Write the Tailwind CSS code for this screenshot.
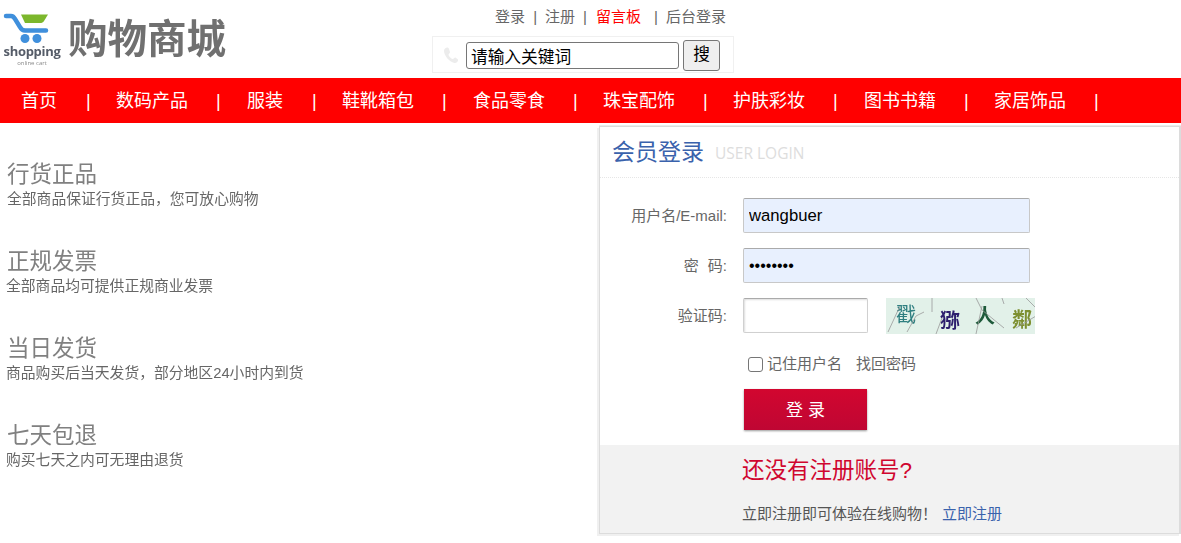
<!DOCTYPE html>
<html lang="zh-CN">
<head>
    <meta charset="UTF-8">
    <meta name="viewport" content="width=device-width, initial-scale=1.0">
    <title>购物商城</title>
    <script src="https://cdn.jsdelivr.net/npm/@tailwindcss/browser@4"></script>
</head>
<body class="bg-white h-[543px] overflow-hidden font-['Liberation_Sans','Noto_Sans_CJK_SC',sans-serif]">
    <!-- header -->
    <header class="relative flex h-[78px]">
        <div class="w-[432px] pl-[3px] pt-[13px] flex items-start">
            <div class="w-[58px] flex flex-col items-center">
                <svg width="58" height="31" viewBox="0 0 58 31" class="blur-[0.4px]">
                    <path d="M3 3H8C10 3 11 4 12 6L17 14C18 16 19 17.500 22 17.500H43" fill="none" stroke="#3f8fdc" stroke-width="4.500" stroke-linecap="round"/>
                    <path d="M18 1.500H45L41 8C40 9.500 39 10 37 10H22Z" fill="#7cb72c"/>
                    <circle cx="22" cy="25.500" r="4.500" fill="#3f8fdc"/>
                    <circle cx="34" cy="25.500" r="4.500" fill="#3f8fdc"/>
                </svg>
                <span class="text-[13px] leading-[14px] font-bold tracking-[-0.3px] text-[#555c68] font-['Open_Sans',sans-serif] blur-[0.3px]">shopping</span>
                <span class="mt-[2px] text-[6px] leading-[6px] text-[#8a8a8a] font-['Open_Sans',sans-serif] blur-[0.3px]">online cart</span>
            </div>
            <span class="ml-[7px] mt-[2px] text-[39.500px] leading-[48px] font-bold text-[#707070] blur-[0.5px]">购物商城</span>
        </div>
        <div class="w-[302px] flex flex-col items-center">
            <div class="mt-[8px] h-[18px] ml-[55px] flex items-center text-[15px] leading-[18px] text-[#666] whitespace-pre">
                <span>登录</span><span class="mx-[8px]">|</span><span>注册</span><span class="ml-[8px] mr-[9px]">|</span><span class="text-[#f00]">留言板</span><span class="ml-[13px] mr-[8px]">|</span><span>后台登录</span>
            </div>
            <div class="mt-[10px] w-[302px] h-[37px] border border-[#f0f0f0] flex items-center pl-[10px]">
                <svg width="16" height="18" viewBox="0 0 16 18" class="shrink-0">
                    <path d="M2 2.500C4 1 5.500 1.500 6 3L7 6C7 7.500 5.500 7.500 5.500 9C6.500 11 8 12.500 9.500 13C11 13 11 11.500 12.500 11.500L15 13.500C15.500 15 14 17 11.500 17C6 16 1 9 1 5C1 4 1.500 3 2 2.500Z" fill="#ececec"/>
                </svg>
                <input type="text" value="请输入关键词" class="ml-[7px] mt-[2px] w-[213px] h-[27px] border border-[#767676] rounded-[3px] px-[4px] text-[16.7px] text-black outline-none">
                <button class="ml-[4px] mt-[1px] w-[37px] h-[31px] bg-[#efefef] border border-[#767676] rounded-[3px] text-[16.7px] text-black">搜</button>
            </div>
        </div>
    </header>

    <!-- nav -->
    <nav class="h-[45px] bg-[#f00] flex items-center pl-[21px] pt-[2px] text-white text-[18px] leading-[43px] whitespace-nowrap">
        <a class="w-[36px]">首页</a><span class="ml-[29px] mr-[27px] w-[3px]">|</span>
        <a class="w-[72px]">数码产品</a><span class="ml-[28px] mr-[28px] w-[3px]">|</span>
        <a class="w-[36px]">服装</a><span class="ml-[29px] mr-[27px] w-[3px]">|</span>
        <a class="w-[72px]">鞋靴箱包</a><span class="ml-[28px] mr-[28px] w-[3px]">|</span>
        <a class="w-[72px]">食品零食</a><span class="ml-[28px] mr-[27px] w-[3px]">|</span>
        <a class="w-[72px]">珠宝配饰</a><span class="ml-[28px] mr-[27px] w-[3px]">|</span>
        <a class="w-[72px]">护肤彩妆</a><span class="ml-[28px] mr-[28px] w-[3px]">|</span>
        <a class="w-[72px]">图书书籍</a><span class="ml-[28px] mr-[27px] w-[3px]">|</span>
        <a class="w-[72px]">家居饰品</a><span class="ml-[28px] w-[3px]">|</span>
    </nav>

    <main class="flex">
        <!-- left promo -->
        <section class="w-[599px] pt-[37px] pl-[7px] flex flex-col gap-[38px] text-[#808080] blur-[0.6px]">
            <div>
                <h3 class="text-[22.500px] leading-[29px]">行货正品</h3>
                <p class="text-[14.800px] leading-[20px] text-[#666]">全部商品保证行货正品，您可放心购物</p>
            </div>
            <div>
                <h3 class="text-[22.500px] leading-[29px]">正规发票</h3>
                <p class="-ml-[1px] text-[14.800px] leading-[20px] text-[#666]">全部商品均可提供正规商业发票</p>
            </div>
            <div>
                <h3 class="text-[22.500px] leading-[29px]">当日发货</h3>
                <p class="-ml-[1px] text-[14.800px] leading-[20px] text-[#666]">商品购买后当天发货，部分地区24小时内到货</p>
            </div>
            <div>
                <h3 class="text-[22.500px] leading-[29px]">七天包退</h3>
                <p class="-ml-[1px] text-[14.800px] leading-[20px] text-[#666]">购买七天之内可无理由退货</p>
            </div>
        </section>

        <!-- login panel -->
        <section class="mt-[3px] w-[582px] h-[408px] border border-r-2 border-[#dcdcdc] shadow-[-2px_2px_0_#f0f0f0,0_-1px_0_#ececec] flex flex-col">
            <div class="h-[51px] border-b border-dotted border-[#e6e6e6] flex items-center pl-[12px]">
                <h2 class="mt-[-1px] text-[23px] leading-[30px] text-[#3a62ac]">会员登录</h2>
                <span class="ml-[11px] mt-[3px] text-[15.500px] text-[#dddddd] font-['Open_Sans',sans-serif]">USER LOGIN</span>
            </div>
            <form class="flex-1 flex flex-col">
                <div class="mt-[20px] flex items-center h-[35px]">
                    <label class="w-[127px] pt-[2px] text-right text-[15px] text-[#666]">用户名/E-mail:</label>
                    <input type="text" value="wangbuer" class="ml-[16px] w-[287px] h-[35px] bg-[#e8f0fe] border border-[#c8c8c8] border-t-[#aaa] rounded-[2px] px-[5px] text-[16.7px] text-black outline-none">
                </div>
                <div class="mt-[15px] flex items-center h-[35px]">
                    <label class="w-[127px] pt-[2px] text-right text-[15px] text-[#666]">密<span class="ml-[9px]">码:</span></label>
                    <input type="password" value="wangbuer" class="ml-[16px] w-[287px] h-[35px] bg-[#e8f0fe] border border-[#c8c8c8] border-t-[#aaa] rounded-[2px] px-[5px] text-[16px] text-black outline-none">
                </div>
                <div class="mt-[15px] flex items-center h-[35px]">
                    <label class="w-[127px] pt-[2px] text-right text-[15px] text-[#666]">验证码:</label>
                    <input type="text" class="ml-[16px] w-[125px] h-[35px] bg-white border border-[#d0d0d0] border-t-[#aaa] rounded-[2px] shadow-[inset_1px_1px_2px_#ddd] outline-none">
                    <svg width="149" height="36" viewBox="0 0 149 36" class="ml-[18px] bg-[#e2f1e9] blur-[0.4px]">
                        <g font-family="Noto Sans CJK SC" font-size="20">
                            <text x="10" y="24" fill="#2f7f80">戳</text>
                            <text x="54" y="30" fill="#2d1f6e" font-weight="700">猕</text>
                            <text x="89" y="25" fill="#1e5a3a" font-weight="700">人</text>
                            <text x="126" y="29" fill="#7d8f30" font-weight="700">鄰</text>
                        </g>
                        <g stroke="#999" stroke-width="0.800" fill="none">
                            <path d="M2 34L14 8M21 34L30 18L38 14M46 0V14M50 36L56 20M90 36L96 8M90 0L96 12L118 30M118 6L116 0M140 0L150 10M130 30L150 18"/>
                        </g>
                    </svg>
                </div>
                <div class="mt-[21px] ml-[148px] flex items-center text-[15px] leading-[20px] text-[#666]">
                    <input type="checkbox" class="w-[15px] h-[15px] m-0 appearance-none border border-[#767676] rounded-[3px] bg-white">
                    <span class="ml-[4px]">记住用户名</span>
                    <a class="ml-[14px]">找回密码</a>
                </div>
                <button type="button" class="ml-[144px] mt-[15px] w-[123px] h-[41px] pt-[2px] pl-[5px] bg-gradient-to-b from-[#d2062f] to-[#bf0633] text-white text-[17px] tracking-[5px] shadow-[0_1px_2px_#999]">登录</button>
                <div class="mt-[15px] flex-1 bg-[#f2f2f2] pl-[142px]">
                    <h3 class="mt-[11px] text-[22.500px] leading-[30px] text-[#d0062f]">还没有注册账号?</h3>
                    <p class="mt-[18px] text-[15px] leading-[20px] text-[#555]">立即注册即可体验在线购物！<a class="ml-[5px] text-[#3a62ac]">立即注册</a></p>
                </div>
            </form>
        </section>
    </main>
</body>
</html>
